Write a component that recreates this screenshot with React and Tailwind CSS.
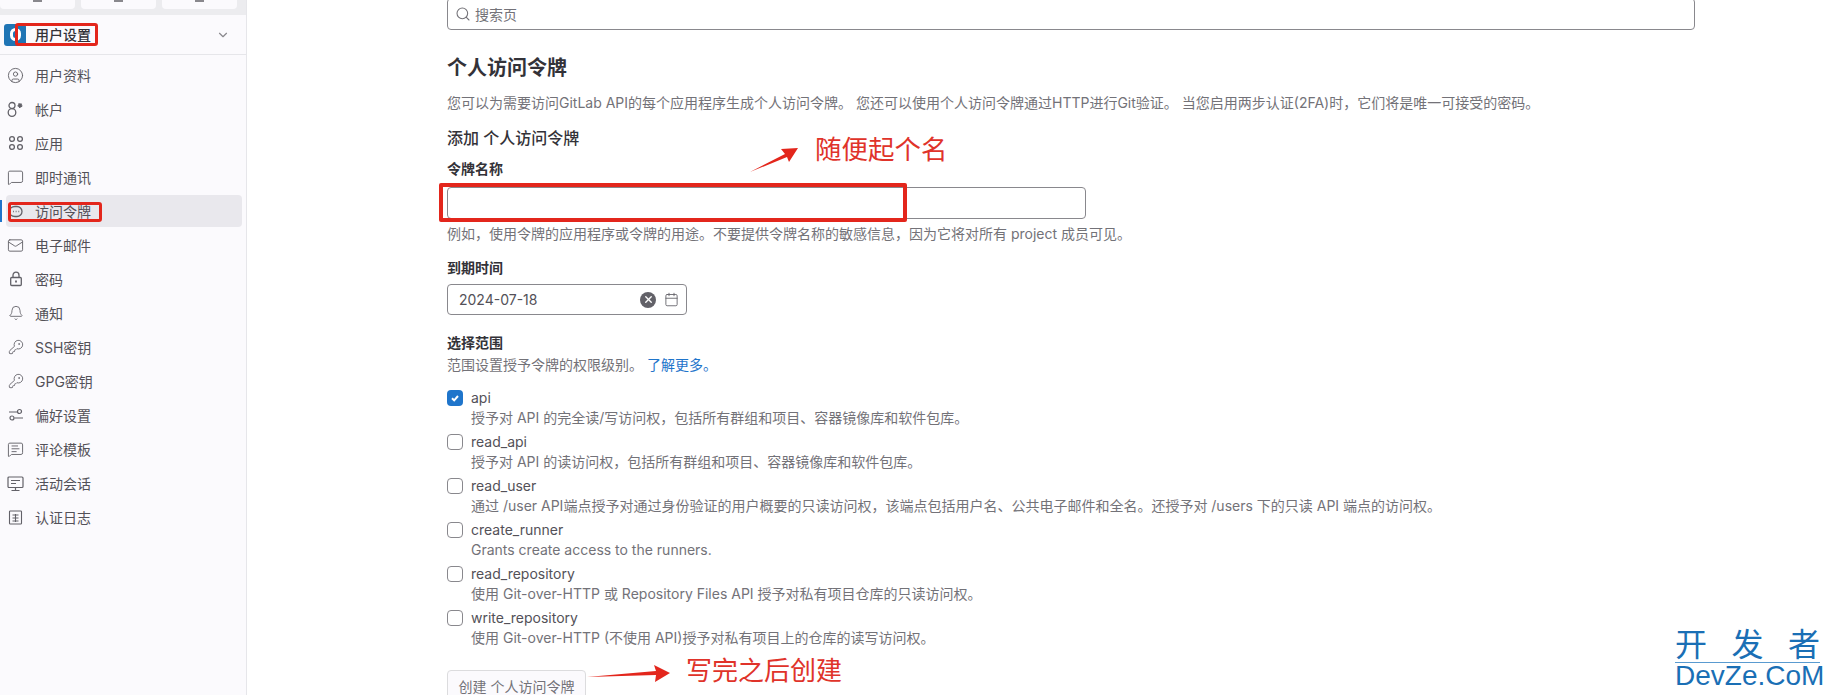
import {
  Bell,
  Calendar,
  ChevronDown,
  CircleUser,
  KeyRound,
  Mail,
  MessageSquare,
  MessageSquareText,
  Search,
  X,
} from "lucide-react";

const font = "font-['Inter','Noto_Sans_CJK_SC',sans-serif]";
const COMMA = "\uFF0C";

const AppsIcon = () => (
  <svg width="16" height="16" viewBox="0 0 16 16" fill="none" stroke="currentColor" strokeWidth="1.3">
    <circle cx="4" cy="4" r="2.4" />
    <circle cx="12" cy="4" r="2.4" />
    <circle cx="4" cy="12" r="2.4" />
    <circle cx="12" cy="12" r="2.4" />
  </svg>
);

const AccountIcon = () => (
  <svg width="17" height="17" viewBox="0 0 17 17" fill="none" stroke="currentColor" strokeWidth="1.3">
    <circle cx="5" cy="4.5" r="3" />
    <circle cx="5" cy="11.5" r="3.8" />
    <circle cx="13" cy="4.5" r="1.8" fill="currentColor" strokeDasharray="1.4 0.6" />
  </svg>
);

const TokenIcon = () => (
  <svg width="17" height="17" viewBox="0 0 17 17" fill="none" stroke="currentColor" strokeWidth="1.3">
    <path d="M2 8.5a6 5 0 0 1 6-5h2a5 5 0 0 1 0 10H8a6 5 0 0 1-6-5z" />
    <path d="M6 8.5h.8M8.7 8.5h.8M11.4 8.5h.8" strokeWidth="1.5" />
  </svg>
);

const LockIcon = () => (
  <svg width="16" height="16" viewBox="0 0 16 16" fill="none" stroke="currentColor" strokeWidth="1.3">
    <rect x="2.7" y="6.5" width="10.6" height="8" rx="1" />
    <path d="M5 6.5V4.2a3 3 0 0 1 6 0v2.3" />
    <path d="M8 9.5v2" strokeWidth="1.8" />
  </svg>
);

const PrefsIcon = () => (
  <svg width="16" height="16" viewBox="0 0 16 16" fill="none" stroke="currentColor" strokeWidth="1.2">
    <circle cx="11.5" cy="4.5" r="2" />
    <circle cx="4" cy="11" r="2" />
    <path d="M1 5h8M6.5 11h8.5" />
  </svg>
);

const SessionIcon = () => (
  <svg width="17" height="17" viewBox="0 0 17 17" fill="none" stroke="currentColor" strokeWidth="1.2">
    <rect x="1" y="2" width="15" height="10.5" rx="1" />
    <path d="M4 5.5h9M4 8.5h5M8.5 12.5v2.5M4.5 15.5h8" />
  </svg>
);

const LogIcon = () => (
  <svg width="15" height="15" viewBox="0 0 15 15" fill="none" stroke="currentColor" strokeWidth="1.1">
    <rect x="1.5" y="1" width="12" height="13" rx="0.8" />
    <path d="M4.5 5h6M4.5 8h6M4.5 11h6M7.5 4v8" />
  </svg>
);

const navItems = [
  { label: "用户资料", icon: <CircleUser size={17} strokeWidth={1.3} /> },
  { label: "帐户", icon: <AccountIcon /> },
  { label: "应用", icon: <AppsIcon /> },
  { label: "即时通讯", icon: <MessageSquare size={17} strokeWidth={1.3} /> },
  { label: "访问令牌", icon: <TokenIcon />, active: true },
  { label: "电子邮件", icon: <Mail size={17} strokeWidth={1.3} /> },
  { label: "密码", icon: <LockIcon /> },
  { label: "通知", icon: <Bell size={16} strokeWidth={1.3} /> },
  { label: "SSH密钥", icon: <KeyRound size={16} strokeWidth={1.3} /> },
  { label: "GPG密钥", icon: <KeyRound size={16} strokeWidth={1.3} /> },
  { label: "偏好设置", icon: <PrefsIcon /> },
  { label: "评论模板", icon: <MessageSquareText size={17} strokeWidth={1.3} /> },
  { label: "活动会话", icon: <SessionIcon /> },
  { label: "认证日志", icon: <LogIcon /> },
];

const scopes = [
  { name: "api", desc: `授予对 API 的完全读/写访问权${COMMA}包括所有群组和项目、容器镜像库和软件包库。`, checked: true },
  { name: "read_api", desc: `授予对 API 的读访问权${COMMA}包括所有群组和项目、容器镜像库和软件包库。` },
  {
    name: "read_user",
    desc: `通过 /user API端点授予对通过身份验证的用户概要的只读访问权${COMMA}该端点包括用户名、公共电子邮件和全名。还授予对 /users 下的只读 API 端点的访问权。`,
  },
  { name: "create_runner", desc: "Grants create access to the runners." },
  { name: "read_repository", desc: "使用 Git-over-HTTP 或 Repository Files API 授予对私有项目仓库的只读访问权。" },
  { name: "write_repository", desc: "使用 Git-over-HTTP (不使用 API)授予对私有项目上的仓库的读写访问权。" },
];

const Sidebar = () => (
  <aside className="w-[247px] shrink-0 h-full bg-[#fbfafd] border-r border-[#e6e6ea]">
    <div className="h-[15px] bg-[#ececef] flex gap-[6px] overflow-hidden">
      {[0, 1, 2].map((n) => (
        <div key={n} className="w-[75px] h-[9px] bg-[#fbfafd] rounded-b-[4px] flex justify-center">
          <span className="w-[9px] h-[2px] bg-[#89888d]" />
        </div>
      ))}
    </div>
    <div className="h-[40px] flex items-center pl-[4px] pr-[16px] border-b border-[#e6e6ea]">
      <div className="w-[22px] h-[22px] rounded-[3px] bg-[#1f75b5] flex items-center justify-center">
        <div className="w-[11px] h-[13px] rounded-full border-[3px] border-white" />
      </div>
      <span className="ml-[9px] text-[14px] font-medium text-[#333238]">用户设置</span>
      <ChevronDown size={14} className="ml-auto text-[#89888d]" />
    </div>
    <nav className="pt-[4px] pl-[6px] pr-[4px]">
      {navItems.map((item) => (
        <div
          key={item.label}
          className={`relative h-[32px] mb-[2px] flex items-center gap-[11px] pl-[1px] rounded-[4px] text-[14px] text-[#535158] ${
            item.active ? "bg-[#e9e8ed]" : ""
          }`}
        >
          {item.active && <span className="absolute left-[-6px] top-[5px] w-[2px] h-[22px] bg-[#1f75cb]" />}
          <span className="w-[17px] flex justify-center text-[#626168]">{item.icon}</span>
          <span>{item.label}</span>
        </div>
      ))}
    </nav>
  </aside>
);

const Scope = ({ name, desc, checked }) => (
  <div className="flex gap-[8px] mb-[4px]">
    <div
      className={`mt-[2px] w-[16px] h-[16px] rounded-[4px] flex items-center justify-center ${
        checked ? "bg-[#1f75cb]" : "bg-white border border-[#89888d]"
      }`}
    >
      {checked && (
        <svg width="10" height="10" viewBox="0 0 10 10" fill="none" stroke="white" strokeWidth="2">
          <path d="M2 5.2l2.2 2.2L8 3" />
        </svg>
      )}
    </div>
    <div>
      <div className="text-[14px] leading-[20px] text-[#535158]">{name}</div>
      <div className="text-[14px] leading-[20px] text-[#737278]">{desc}</div>
    </div>
  </div>
);

const Annotations = () => (
  <>
    <div className="absolute left-[15px] top-[23px] w-[83px] h-[23px] border-[3px] border-[#e3261c] rounded-[3px]" />
    <div className="absolute left-[8px] top-[202px] w-[94px] h-[20px] border-[3px] border-[#e3261c] rounded-[3px]" />
    <div className="absolute left-[439px] top-[183px] w-[468px] h-[39px] border-[4px] border-[#e3261c] rounded-[2px]" />
    <svg className="absolute left-[745px] top-[142px]" width="60" height="36" viewBox="0 0 60 36">
      <path d="M5 30L40 12L36 7L53 6L44 20L42 15Z" fill="#e3261c" />
    </svg>
    <svg className="absolute left-[585px] top-[660px]" width="90" height="26" viewBox="0 0 90 26">
      <path d="M2 17L71 11L69 5L85 13L70 22L71 15Z" fill="#e3261c" />
    </svg>
    <span className="absolute left-[815px] top-[131px] text-[26.5px] leading-[36px] text-[#e0332a]">随便起个名</span>
    <span className="absolute left-[686px] top-[653px] text-[26px] leading-[36px] text-[#e0332a]">写完之后创建</span>
    <div className="absolute left-[1675px] top-[628px] w-[145px] text-[#1a6fb5]">
      <div className="flex justify-between text-[32px] leading-[34px]">
        <span>开</span>
        <span>发</span>
        <span>者</span>
      </div>
      <div className="border-t border-[#5a9bd0] text-[28px] leading-[26px] font-['Liberation_Sans',sans-serif] whitespace-nowrap">
        DevZe.CoM
      </div>
    </div>
  </>
);

export default function App() {
  return (
    <div className={`relative w-[1832px] h-[695px] overflow-hidden flex bg-white ${font}`}>
      <Sidebar />
      <main className="pl-[200px] w-[1448px] -mt-[2px]">
        <div className="h-[32px] border border-[#89888d] rounded-[4px] flex items-center pl-[7px] gap-[4px] text-[14px] text-[#737278]">
          <Search size={16} strokeWidth={1.6} />
          <span>搜索页</span>
        </div>
        <h1 className="mt-[24px] text-[20px] leading-[28px] font-semibold text-[#333238]">个人访问令牌</h1>
        <p className="mt-[11px] text-[14px] leading-[20px] text-[#737278] whitespace-nowrap">
          {`您可以为需要访问GitLab API的每个应用程序生成个人访问令牌。 您还可以使用个人访问令牌通过HTTP进行Git验证。 当您启用两步认证(2FA)时${COMMA}它们将是唯一可接受的密码。`}
        </p>
        <h2 className="mt-[13px] text-[16px] leading-[24px] font-medium text-[#333238]">添加 个人访问令牌</h2>
        <div className="mt-[10px] text-[14px] leading-[18px] font-semibold text-[#333238]">令牌名称</div>
        <div className="mt-[9px] w-[639px] h-[32px] border border-[#89888d] rounded-[4px] bg-white" />
        <p className="mt-[5px] text-[14px] leading-[20px] text-[#737278]">
          {`例如${COMMA}使用令牌的应用程序或令牌的用途。不要提供令牌名称的敏感信息${COMMA}因为它将对所有 project 成员可见。`}
        </p>
        <div className="mt-[15px] text-[14px] leading-[18px] font-semibold text-[#333238]">到期时间</div>
        <div className="mt-[7px] w-[240px] h-[31px] border border-[#89888d] rounded-[4px] flex items-center pl-[11px] pr-[7px] text-[14px] text-[#535158]">
          <span>2024-07-18</span>
          <span className="ml-auto w-[16px] h-[16px] rounded-full bg-[#626168] flex items-center justify-center text-white">
            <X size={11} strokeWidth={3} />
          </span>
          <Calendar size={15} strokeWidth={1.4} className="ml-[8px] text-[#626168]" />
        </div>
        <div className="mt-[19px] text-[14px] leading-[18px] font-semibold text-[#333238]">选择范围</div>
        <p className="mt-[3px] text-[14px] leading-[20px] text-[#737278]">
          范围设置授予令牌的权限级别。 <a className="text-[#1f75cb]">了解更多。</a>
        </p>
        <div className="mt-[13px]">
          {scopes.map((scope) => (
            <Scope key={scope.name} {...scope} />
          ))}
        </div>
        <button className="mt-[18px] w-[139px] h-[32px] border border-[#dcdcde] rounded-[4px] bg-[#fbfafd] text-[14px] text-[#737278]">
          创建 个人访问令牌
        </button>
      </main>
      <Annotations />
    </div>
  );
}
